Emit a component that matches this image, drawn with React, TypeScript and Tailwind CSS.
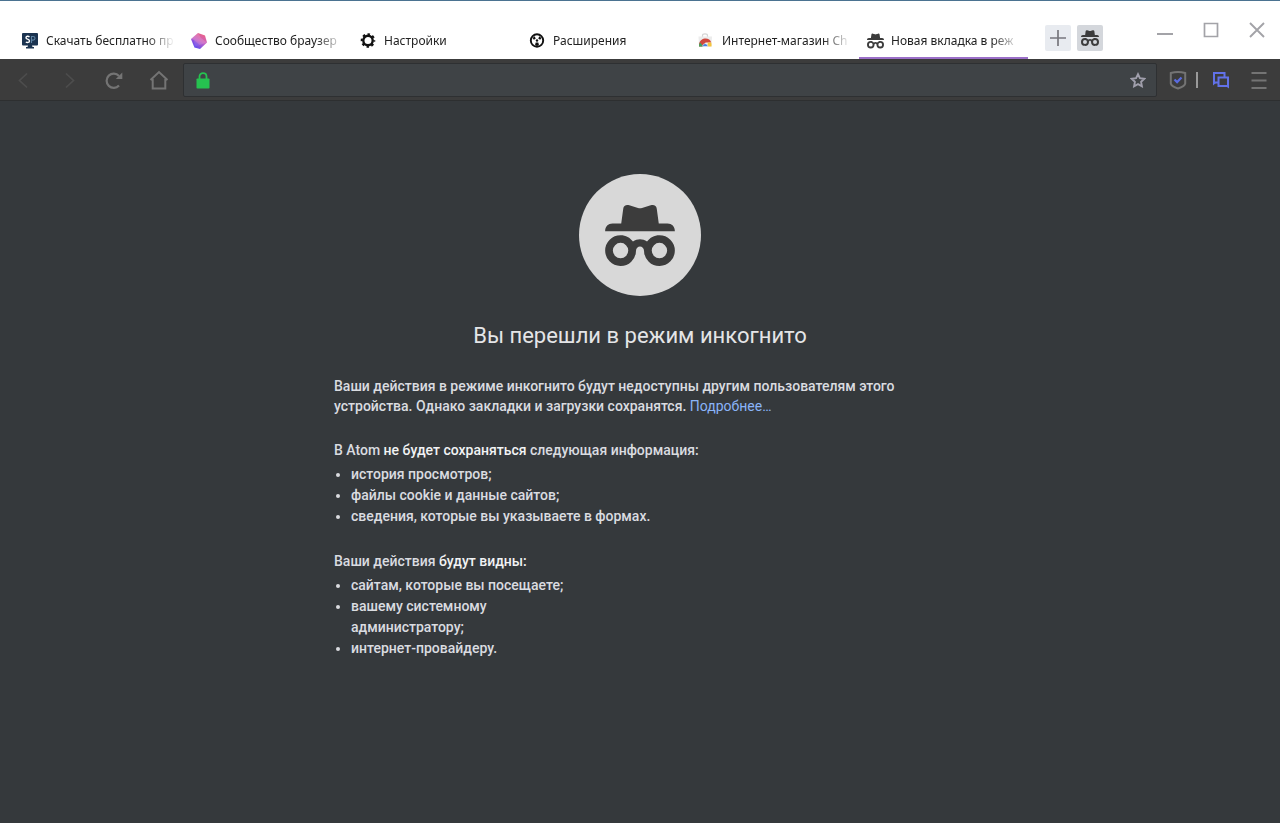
import type { ReactNode } from "react";

const tabIcon = "h-4 w-[17px] shrink-0";

function Incognito({ className = "" }: { className?: string }) {
  return (
    <svg viewBox="136 134 208 182" className={className} fill="#3c3c3c" aria-hidden="true">
      <path d="M136 212c0-14 9-23 22-23h26l6-44c1-9 9-13 18-10l26 8q6 2 12 0l26-8c9-3 17 1 18 10l6 44h26c13 0 22 9 22 23z" />
      <path
        fillRule="evenodd"
        d="M182 224c16 0 28 7 37 19 13-9 29-9 42 0 9-12 21-19 37-19a46 46 0 1 1-46 47c0-18-24-18-24 0a46 46 0 1 1-46-47zm0 23a23 23 0 1 0 0 46 23 23 0 0 0 0-46zm116 0a23 23 0 1 0 0 46 23 23 0 0 0 0-46z"
      />
    </svg>
  );
}

function MonitorIcon() {
  return (
    <svg viewBox="0 0 17 16" className={tabIcon} aria-hidden="true">
      <path d="M1 0h14a1 1 0 0 1 1 1v10.500a1 1 0 0 1-1 1H10l.5 1.500h1.500V15.500h-8v-1.500h1.500l.5-1.500h-5a1 1 0 0 1-1-1V1a1 1 0 0 1 1-1z" fill="#1b3350" />
      <path d="M7.500 3.800C6.300 3 4 3 4 4.700c0 1.800 3.500 1.200 3.500 3.300 0 1.700-2.400 1.700-3.700 1" fill="none" stroke="#fff" strokeWidth="1.400" />
      <path d="M9.500 10V3.500h1.500c2.700 0 2.700 3.600 0 3.600H9.500" fill="none" stroke="#5d83a3" strokeWidth="1.100" />
    </svg>
  );
}

function GemIcon() {
  return (
    <svg viewBox="0 0 17 16" className={tabIcon} aria-hidden="true">
      <defs>
        <linearGradient id="gem" x1="0.8" y1="0" x2="0.3" y2="1">
          <stop offset="0" stopColor="#f0607c" />
          <stop offset="0.5" stopColor="#c862c4" />
          <stop offset="1" stopColor="#5648f0" />
        </linearGradient>
      </defs>
      <path d="M7 0 14 2.500 16 9.500 9 16 3.500 14.500 0 6z" fill="url(#gem)" />
      <path d="M7 0 10 5 16 9.500 8.500 12 3.500 14 3 7 0 6z" fill="#fff" opacity="0.14" />
      <path d="M3 7 8.500 12 3.500 14.500 0 6z" fill="#4a35ff" opacity="0.25" />
    </svg>
  );
}

function GearIcon() {
  return (
    <svg viewBox="0 0 17 16" className={tabIcon} aria-hidden="true">
      <circle cx="8" cy="7.500" r="4.700" fill="none" stroke="#111" strokeWidth="2.400" />
      <circle cx="8" cy="7.500" r="6.300" fill="none" stroke="#111" strokeWidth="2" strokeDasharray="2.474 2.474" strokeDashoffset="1.237" />
    </svg>
  );
}

function ExtensionIcon() {
  return (
    <svg viewBox="0 0 17 16" className={tabIcon} aria-hidden="true">
      <circle cx="8" cy="7.500" r="6.200" fill="none" stroke="#111" strokeWidth="1.900" />
      <circle cx="8" cy="7.500" r="1.200" fill="#111" />
      <path d="M3.600 5.100 5.800 3.300 6.700 5.700 4.800 6.800zM12.400 5.100 10.200 3.300 9.300 5.700 11.200 6.800zM6.700 9.600h2.600l.7 2.700-2 .7-2-.7z" fill="#111" />
    </svg>
  );
}

function StoreIcon() {
  return (
    <svg viewBox="0 0 17 16" className={tabIcon} aria-hidden="true">
      <path d="M4.500 4V2.500C4.500.3 9.500.3 9.500 2.500V4" fill="none" stroke="#d5d5d5" strokeWidth="1.200" />
      <path d="M0.500 3.500h13.500L13.500 13.500H1z" fill="#ececec" />
      <path d="M1 11.500C2 4 12 4 13.200 9.500H7.500L5 13.500H1z" fill="#d0483e" />
      <path d="M1 13.500c0-1.800.3-2.800 1-4L5.500 13.500z" fill="#3da55c" />
      <path d="M13.200 9.500c.4 1.500.4 2.500.3 4H9l1-4z" fill="#f5c33b" />
      <path d="M4.600 13.500c0-3.800 5.200-3.800 5.200 0z" fill="#4a80e0" stroke="#fff" strokeWidth="0.5" />
    </svg>
  );
}

const tabs: { title: string; icon: ReactNode; active?: boolean }[] = [
  { title: "Скачать бесплатно пр", icon: <MonitorIcon /> },
  { title: "Сообщество браузер", icon: <GemIcon /> },
  { title: "Настройки", icon: <GearIcon /> },
  { title: "Расширения", icon: <ExtensionIcon /> },
  { title: "Интернет-магазин Ch", icon: <StoreIcon /> },
  { title: "Новая вкладка в реж", icon: <Incognito className={tabIcon} />, active: true },
];

function TabBar() {
  return (
    <header className="flex h-[59px] border-t border-[#4b7391] bg-white">
      <div role="tablist" className="flex min-w-0 pl-[14px] font-['Noto_Sans','Open_Sans',sans-serif]">
        {tabs.map((tab) => (
          <button
            key={tab.title}
            role="tab"
            aria-selected={!!tab.active}
            className={`flex w-[169px] min-w-0 items-center gap-[7px] border-b-2 px-2 pt-6 text-left text-xs text-[#222] ${
              tab.active ? "border-[#9b6fc8]" : "border-transparent"
            }`}
          >
            {tab.icon}
            <span className="min-w-0 flex-1 overflow-hidden whitespace-nowrap [mask-image:linear-gradient(to_right,black_78%,transparent)]">
              {tab.title}
            </span>
          </button>
        ))}
      </div>
      <div className="flex items-start gap-[6px] pt-6 pl-[17px]">
        <button aria-label="Новая вкладка" className="flex size-[26px] items-center justify-center rounded-xs bg-[#e8ebf0]">
          <svg viewBox="0 0 16 16" className="size-4" stroke="#77777d" strokeWidth="1.700" aria-hidden="true">
            <path d="M8 0v16M0 8h16" />
          </svg>
        </button>
        <button aria-label="Инкогнито" className="flex size-[26px] items-center justify-center rounded-xs bg-[#d4d7dc]">
          <Incognito className="h-4 w-[18px]" />
        </button>
      </div>
      <div className="ml-auto flex items-start gap-[30px] pt-[21px] pr-[15px]">
        <button aria-label="Свернуть">
          <svg viewBox="0 0 16 16" className="size-4" stroke="#a3a3a8" strokeWidth="2" aria-hidden="true">
            <path d="M0 12h16" />
          </svg>
        </button>
        <button aria-label="Развернуть">
          <svg viewBox="0 0 16 16" className="size-4" fill="none" stroke="#a3a3a8" strokeWidth="1.700" aria-hidden="true">
            <path d="M1.500 1.500h13v13h-13z" />
          </svg>
        </button>
        <button aria-label="Закрыть">
          <svg viewBox="0 0 16 16" className="size-4" stroke="#a3a3a8" strokeWidth="1.900" aria-hidden="true">
            <path d="M1 1l14 14M15 1 1 15" />
          </svg>
        </button>
      </div>
    </header>
  );
}

function Toolbar() {
  return (
    <nav className="flex h-[42px] items-center border-b border-[#2d2f30] bg-[#3c3c3c] pr-[13px] pl-[14px]">
      <div className="flex items-center gap-[25px] pr-[14px]">
        <button aria-label="Назад">
          <svg viewBox="0 0 20 20" className="size-5" fill="none" stroke="#4d4d4d" strokeWidth="1.700" aria-hidden="true">
            <path d="M13 3.500 5.500 10.500l7.500 7" />
          </svg>
        </button>
        <button aria-label="Вперёд">
          <svg viewBox="0 0 20 20" className="size-5" fill="none" stroke="#4d4d4d" strokeWidth="1.700" aria-hidden="true">
            <path d="M7 3.500l7.500 7-7.500 7" />
          </svg>
        </button>
        <button aria-label="Обновить">
          <svg viewBox="0 0 20 20" className="size-5" fill="none" stroke="#747474" strokeWidth="2.200" aria-hidden="true">
            <path d="M15 15.500A7.100 7.100 0 1 1 15 6" />
            <path d="M18.300 2.500v6.500H11.800z" fill="#747474" stroke="none" />
          </svg>
        </button>
        <button aria-label="Домой">
          <svg viewBox="0 0 20 20" className="size-5" fill="none" stroke="#747474" strokeWidth="2" aria-hidden="true">
            <path d="M1.500 10 10 2l8.500 8M3.700 9v9.500h12.600V9" />
          </svg>
        </button>
      </div>
      <div className="flex h-[34px] min-w-0 flex-1 items-center rounded-xs border border-[#2e3032] bg-[#3f4346] pr-[10px] pl-3">
        <svg viewBox="0 0 14 18" className="h-[18px] w-[14px]" aria-hidden="true">
          <path d="M3.500 8V5.500C3.500 1 10.500 1 10.500 5.500v2.500" fill="none" stroke="#26c250" strokeWidth="1.800" />
          <rect x="0.500" y="7.500" width="13" height="10" rx="0.800" fill="#26c250" />
        </svg>
        <input aria-label="Адресная строка" className="mx-2 min-w-0 flex-1 bg-transparent text-sm text-gray-200 outline-none" />
        <button aria-label="В закладки">
          <svg viewBox="0 0 16 16" className="size-4" fill="none" stroke="#a09fac" strokeWidth="1.900" aria-hidden="true">
            <path d="M8 2.200 9.900 6.200l4.300.6-3.100 3 .8 4.500L8 12.200l-3.900 2.100.8-4.500-3.100-3 4.300-.6z" />
          </svg>
        </button>
      </div>
      <div className="flex items-center pl-3">
        <button aria-label="Защита">
          <svg viewBox="0 0 18 20" className="h-5 w-[18px]" fill="none" aria-hidden="true">
            <path d="M1.800 3Q9 1 16.200 3V13.500Q15.500 16.500 9 18.500 2.500 16.500 1.800 13.500z" stroke="#747474" strokeWidth="2" />
            <path d="M5.500 9.500l2.600 2.600L12.500 7.500" stroke="#5a6be0" strokeWidth="2.200" />
          </svg>
        </button>
        <span className="mx-[9px] h-4 w-[2px] bg-[#9a9a9a]" />
        <button aria-label="Боковая панель" className="ml-[5px]">
          <svg viewBox="0 0 18 18" className="size-[18px]" fill="none" aria-hidden="true">
            <path d="M6 11.500H2V2h10.500v4" stroke="#6272e8" strokeWidth="2" />
            <path d="M6.500 6.500H16v8.500H6.500z" stroke="#6272e8" strokeWidth="2" />
            <path d="M1 11v3.500L4.500 11.500zM17 14v3.500L13.500 15z" fill="#6272e8" />
          </svg>
        </button>
        <button aria-label="Меню" className="ml-[21px]">
          <svg viewBox="0 0 16 18" className="h-[18px] w-4" stroke="#747474" strokeWidth="2" aria-hidden="true">
            <path d="M0.500 2h15M0.500 9.500h15M0.500 17h15" />
          </svg>
        </button>
      </div>
    </nav>
  );
}

export default function App() {
  return (
    <div className="flex min-h-screen flex-col bg-[#35393c]">
      <TabBar />
      <Toolbar />
      <main className="mx-auto w-full max-w-[612px] pt-[73px] pb-10 font-[Roboto,sans-serif] text-sm leading-5 font-medium text-[#dadce0]">
        <div className="mx-auto flex size-[122px] items-center justify-center rounded-full bg-[#d8d8d8]">
          <Incognito className="h-[61px] w-[70px]" />
        </div>
        <h1 className="mt-6 text-center text-[22px] leading-8 font-normal text-[#e4e5e7]">Вы перешли в режим инкогнито</h1>
        <p className="mt-6">
          Ваши действия в режиме инкогнито будут недоступны другим пользователям этого устройства. Однако закладки и
          загрузки сохранятся.{" "}
          <a href="#" className="font-normal text-[#8ab4f8]">
            Подробнее…
          </a>
        </p>
        <section className="mt-6">
          <p>
            В Atom <strong className="font-medium text-[#f1f3f4]">не будет сохраняться</strong> следующая информация:
          </p>
          <ul className="mt-1 list-disc pl-[17px] leading-[21px]">
            <li>история просмотров;</li>
            <li>файлы cookie и данные сайтов;</li>
            <li>сведения, которые вы указываете в формах.</li>
          </ul>
        </section>
        <section className="mt-6">
          <p>
            Ваши действия <strong className="font-medium text-[#f1f3f4]">будут видны:</strong>
          </p>
          <ul className="mt-1 max-w-[250px] list-disc pl-[17px] leading-[21px]">
            <li>сайтам, которые вы посещаете;</li>
            <li>вашему системному администратору;</li>
            <li>интернет-провайдеру.</li>
          </ul>
        </section>
      </main>
    </div>
  );
}
